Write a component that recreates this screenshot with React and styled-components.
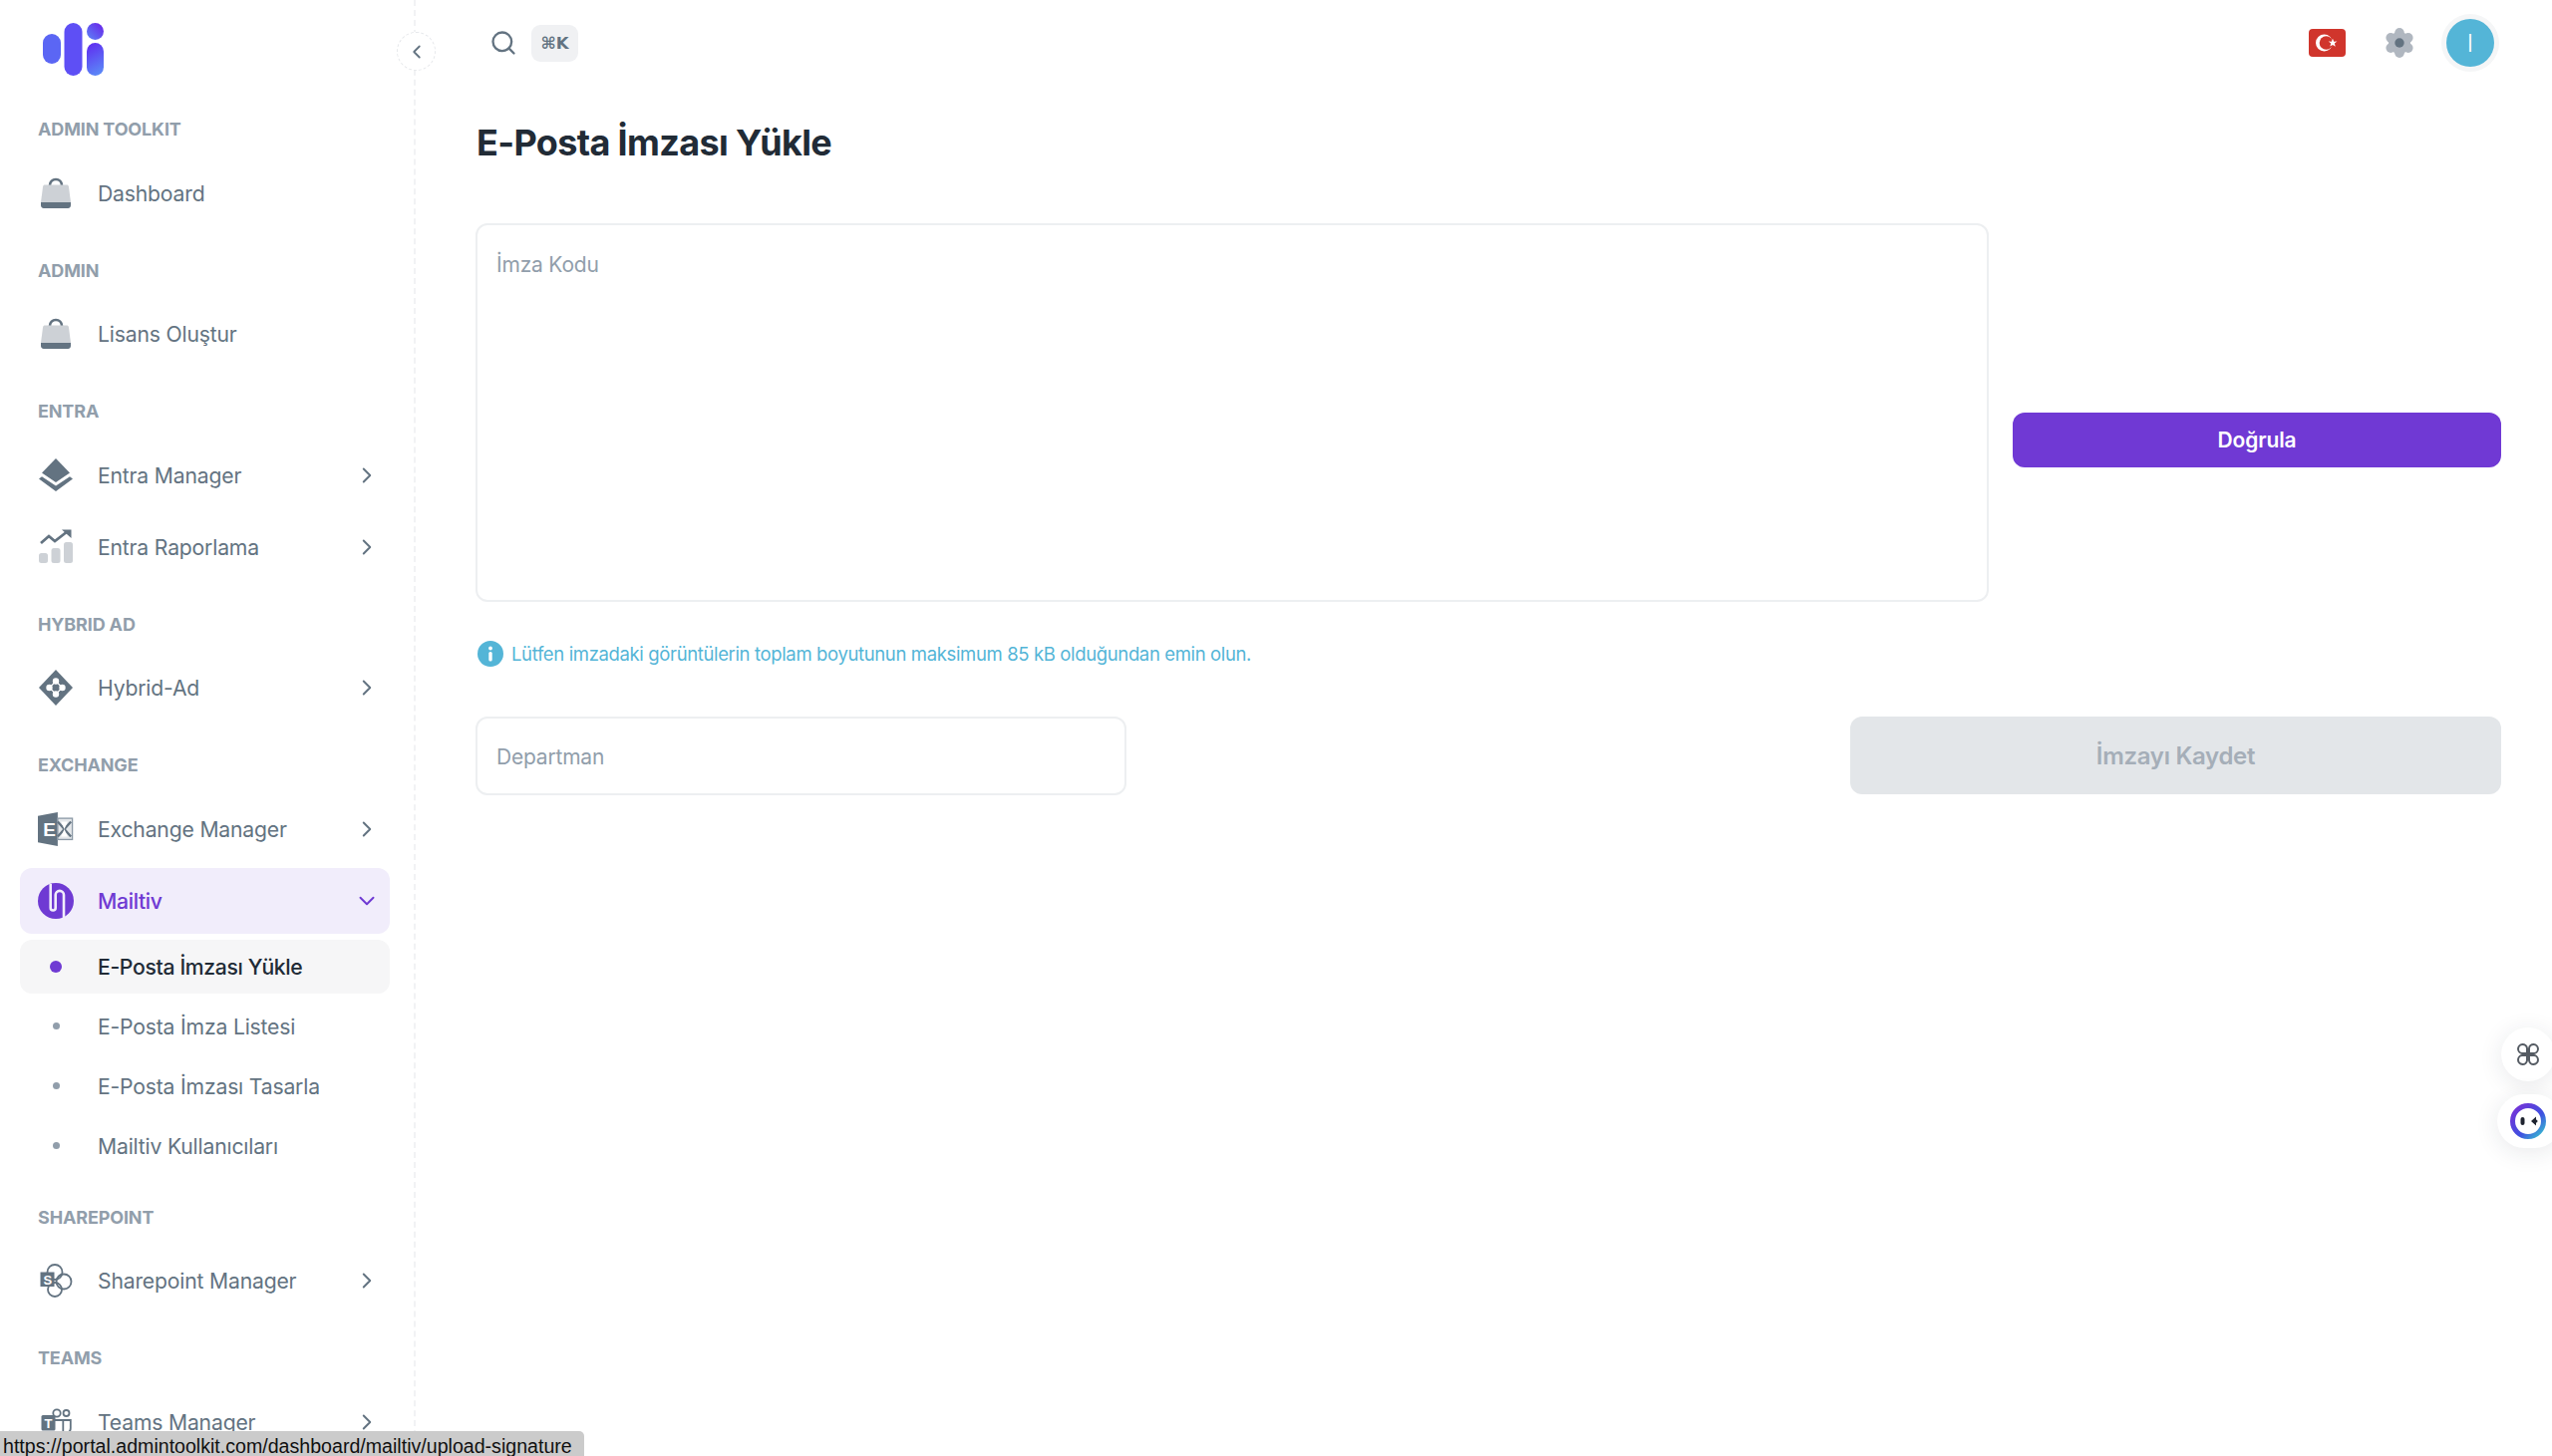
import React from "react";
import styled, { createGlobalStyle } from "styled-components";
import { ChevronLeft, ChevronRight, ChevronDown, Search } from "lucide-react";

const GlobalStyle = createGlobalStyle`
  html, body {
    margin: 0;
    height: 100%;
    background: #fff;
    overflow: hidden;
  }
  * {
    box-sizing: border-box;
  }
  body {
    font-family: Inter, "Noto Sans", sans-serif;
    color: #212b36;
  }
`;

const Layout = styled.div`
  display: flex;
  height: 100vh;
  overflow: hidden;
  position: relative;
`;

const Sidebar = styled.aside`
  position: relative;
  flex: 0 0 417px;
  height: 100%;
  border-right: 2px dashed #f1f2f4;
`;

const LogoRow = styled.div`
  height: 115px;
  padding: 22px 0 0 43px;
`;

const CollapseButton = styled.button`
  position: absolute;
  top: 32px;
  left: 398px;
  width: 39px;
  height: 39px;
  padding: 0;
  display: flex;
  align-items: center;
  justify-content: center;
  background: #fff;
  border: 1px dashed #e6e8eb;
  border-radius: 50%;
  color: #637381;
`;

const Nav = styled.nav`
  display: flex;
  flex-direction: column;
  gap: 30px;
  padding: 0 24px 0 20px;
`;

const Section = styled.section`
  display: flex;
  flex-direction: column;
  gap: 6px;
`;

const SectionLabel = styled.h4`
  margin: 0 0 9.5px;
  padding-left: 18px;
  height: 30px;
  line-height: 30px;
  font-size: 18px;
  font-weight: 700;
  letter-spacing: -0.15px;
  color: #919eab;
`;

const NavItem = styled.a`
  display: flex;
  align-items: center;
  height: 66px;
  padding: 0 10px 0 18px;
  border-radius: 12px;
  background: ${(props) => (props.$active ? "#f1edfb" : "transparent")};
  color: ${(props) => (props.$active ? "#6f3ad3" : "#637381")};
`;

const IconSlot = styled.span`
  flex: 0 0 36px;
  width: 36px;
  height: 36px;
  display: flex;
  align-items: center;
  justify-content: center;
`;

const ItemLabel = styled.span`
  flex: 1;
  margin-left: 24px;
  font-size: 21.2px;
  font-weight: ${(props) => (props.$active ? 500 : 400)};
  letter-spacing: ${(props) => (props.$active ? -0.35 : -0.2)}px;
  white-space: nowrap;
`;

const SubList = styled.div`
  display: flex;
  flex-direction: column;
  gap: 6px;
`;

const SubItem = styled.a`
  display: flex;
  align-items: center;
  height: 54px;
  padding-left: 18px;
  border-radius: 12px;
  background: ${(props) => (props.$active ? "#f6f6f7" : "transparent")};
  color: ${(props) => (props.$active ? "#212b36" : "#637381")};
`;

const SubDotSlot = styled.span`
  flex: 0 0 36px;
  display: flex;
  justify-content: center;
`;

const SubDot = styled.span`
  width: ${(props) => (props.$active ? 12 : 7)}px;
  height: ${(props) => (props.$active ? 12 : 7)}px;
  border-radius: 50%;
  background: ${(props) => (props.$active ? "#6f3ad3" : "#919eab")};
`;

const Main = styled.main`
  flex: 1;
  min-width: 0;
  padding: 0 51px 0 60px;
`;

const Header = styled.header`
  display: flex;
  align-items: center;
  justify-content: space-between;
  height: 86px;
  padding: 0 2px 0 14px;
`;

const SearchBox = styled.div`
  display: flex;
  align-items: center;
  gap: 14px;
  color: #637381;
`;

const Kbd = styled.span`
  display: flex;
  align-items: center;
  justify-content: center;
  width: 47px;
  height: 37px;
  border-radius: 9px;
  background: #f0f1f3;
  font-family: "DejaVu Sans", Inter, sans-serif;
  font-size: 16.5px;
  font-weight: 700;
  color: #637381;
`;

const HeaderActions = styled.div`
  display: flex;
  align-items: center;
  gap: 38px;
`;

const Avatar = styled.div`
  width: 48px;
  height: 48px;
  margin: 0 5px 0 -7px;
  display: flex;
  align-items: center;
  justify-content: center;
  border-radius: 50%;
  background: #54b5d7;
  box-shadow: 0 0 0 5px #f5f6f7;
  color: #fff;
  font-size: 24px;
  font-weight: 300;
`;

const Title = styled.h1`
  margin: 30px 0 54px 1px;
  height: 54px;
  line-height: 54px;
  font-size: 36px;
  font-weight: 700;
  letter-spacing: -0.65px;
  color: #212b36;
`;

const CodeRow = styled.div`
  display: flex;
  align-items: flex-start;
  gap: 24px;
`;

const CodeArea = styled.textarea`
  flex: 1;
  height: 380px;
  padding: 26.5px 19px;
  resize: none;
  border: 2px solid #edeff1;
  border-radius: 12px;
  outline: none;
  font-family: inherit;
  font-size: 21px;
  letter-spacing: -0.2px;
  &::placeholder {
    color: #919eab;
    opacity: 1;
  }
`;

const VerifyButton = styled.button`
  flex: 0 0 490px;
  height: 55px;
  margin-top: 190px;
  border: none;
  border-radius: 12px;
  background: #7039d4;
  color: #fff;
  font-family: inherit;
  font-size: 21px;
  font-weight: 600;
  letter-spacing: -0.15px;
`;

const Note = styled.div`
  display: flex;
  align-items: center;
  gap: 8px;
  height: 32px;
  margin: 36px 0 47px;
  padding-left: 2px;
  font-size: 18.5px;
  letter-spacing: -0.36px;
  color: #54b5d7;
`;

const BottomRow = styled.div`
  display: flex;
  justify-content: space-between;
  align-items: flex-start;
`;

const DepartmentInput = styled.input`
  width: 653px;
  height: 79px;
  padding: 2px 19px 0;
  border: 2px solid #edeff1;
  border-radius: 12px;
  outline: none;
  font-family: inherit;
  font-size: 21px;
  letter-spacing: -0.2px;
  &::placeholder {
    color: #919eab;
    opacity: 1;
  }
`;

const SaveButton = styled.button`
  width: 653px;
  height: 78px;
  border: none;
  border-radius: 12px;
  background: #e3e6e9;
  color: #a5aeb8;
  font-family: inherit;
  font-size: 24px;
  font-weight: 600;
  letter-spacing: -0.3px;
`;

const FloatingTab = styled.button`
  position: fixed;
  right: ${(props) => (props.$pill ? -10 : -3)}px;
  top: ${(props) => props.$top}px;
  width: ${(props) => (props.$pill ? 65 : 54)}px;
  height: 54px;
  padding: ${(props) => (props.$pill ? "0 0 0 13px" : 0)};
  display: flex;
  align-items: center;
  justify-content: ${(props) => (props.$pill ? "flex-start" : "center")};
  border: none;
  border-radius: 27px;
  background: #fff;
  box-shadow: 0 4px 24px rgba(33, 43, 54, 0.1);
`;

const StatusBar = styled.div`
  position: fixed;
  left: 0;
  bottom: 0;
  width: 586px;
  height: 25px;
  padding: 0 0 0 3px;
  background: #cbcbcb;
  border-top-right-radius: 5px;
  font-family: "Liberation Sans", Arial, sans-serif;
  font-size: 19.6px;
  line-height: 30px;
  color: #111;
  white-space: nowrap;
  overflow: hidden;
`;

const Logo = () => (
  <svg width="62" height="54" viewBox="0 0 62 54">
    <defs>
      <linearGradient id="logoA" x1="1" y1="0" x2="0" y2="1">
        <stop offset="0" stopColor="#6a1fe8" />
        <stop offset="1" stopColor="#5b86f7" />
      </linearGradient>
      <linearGradient id="logoB" x1="0.2" y1="0" x2="0.5" y2="1">
        <stop offset="0" stopColor="#5f2cf0" />
        <stop offset="1" stopColor="#5b86f7" />
      </linearGradient>
    </defs>
    <rect x="0" y="12" width="18" height="30" rx="9" fill="#5b66f4" />
    <rect x="21.5" y="1" width="18" height="53" rx="9" fill="#5e4ff5" />
    <circle cx="52.5" cy="9.5" r="8.5" fill="url(#logoA)" />
    <rect x="44" y="21" width="17" height="33" rx="8.5" fill="url(#logoB)" />
  </svg>
);

const BagIcon = () => (
  <svg width="36" height="36" viewBox="0 0 36 36">
    <path d="M12 10c0-3.500 2.600-6 6-6s6 2.500 6 6" fill="none" stroke="#637381" strokeWidth="2.600" />
    <path d="M7 9.500h22c1 0 1.700.6 1.900 1.500l2.100 16H3l2.100-16c.2-.9.9-1.500 1.900-1.500z" fill="#cdd1d6" />
    <path d="M3 27h30v3c0 1.600-1.100 3-2.800 3H5.800C4.100 33 3 31.600 3 30v-3z" fill="#637381" />
  </svg>
);

const EntraIcon = () => (
  <svg width="36" height="36" viewBox="0 0 36 36">
    <path d="M18 1l14 14.500L18 25 4 15.500 18 1z" fill="#637381" />
    <path d="M1 21.500l3-2.300L18 28.500l14-9.300 3 2.300L18 34 1 21.500z" fill="#637381" />
  </svg>
);

const ReportIcon = () => (
  <svg width="36" height="36" viewBox="0 0 36 36">
    <path d="M3 14l8-7 6 5L30 2" fill="none" stroke="#637381" strokeWidth="2.800" />
    <path d="M24 .5h9.500V9z" fill="#637381" />
    <rect x="1" y="24" width="9" height="10" rx="2.500" fill="#cdd1d6" />
    <rect x="13.500" y="19" width="9" height="15" rx="2.500" fill="#cdd1d6" />
    <rect x="26" y="13" width="9" height="21" rx="2.500" fill="#cdd1d6" />
  </svg>
);

const HybridIcon = () => (
  <svg width="36" height="36" viewBox="0 0 36 36">
    <path d="M18 0l17 18-17 18L1 18 18 0z" fill="#637381" />
    <g fill="#fff">
      <circle cx="18" cy="11.500" r="3.200" />
      <circle cx="11.500" cy="18" r="3.200" />
      <circle cx="24.500" cy="18" r="3.200" />
      <circle cx="18" cy="24.500" r="3.200" />
    </g>
    <path d="M18 11.500L24.500 18 18 24.500 11.500 18z" fill="none" stroke="#fff" strokeWidth="1.200" />
  </svg>
);

const ExchangeIcon = () => (
  <svg width="38" height="36" viewBox="0 0 38 36">
    <path d="M21 0v36L0 32V4L21 0z" fill="#637381" />
    <rect x="21" y="6.500" width="15.500" height="22.500" fill="#e4e7ea" stroke="#8c99a6" strokeWidth="1.400" />
    <path d="M21 10l14 16M35 10L21 26" stroke="#637381" strokeWidth="2.400" fill="none" />
    <path d="M28 18l-3.500-8h7zM28 18l-3.500 8h7z" fill="#fff" />
    <text x="5.500" y="25" fontFamily="Liberation Sans, sans-serif" fontWeight="700" fontSize="20" fill="#fff">E</text>
  </svg>
);

const MailtivIcon = () => (
  <svg width="36" height="36" viewBox="0 0 36 36">
    <circle cx="18" cy="18" r="18" fill="#6f3ad3" />
    <path
      d="M12.700 1V25a2.500 2.500 0 0 0 5 0V12a4.100 4.100 0 0 1 8.300 0V35"
      fill="none"
      stroke="#f1edfb"
      strokeWidth="2.600"
    />
  </svg>
);

const SharepointIcon = () => (
  <svg width="36" height="36" viewBox="0 0 36 36">
    <g fill="none" stroke="#637381" strokeWidth="1.800">
      <circle cx="17" cy="9.500" r="7.500" />
      <circle cx="26" cy="19" r="7.500" />
      <circle cx="17" cy="27" r="7" />
    </g>
    <rect x="2.500" y="9.500" width="14" height="14.500" fill="#637381" />
    <text x="5.500" y="21.500" fontFamily="Liberation Sans, sans-serif" fontWeight="700" fontSize="13" fill="#fff">S</text>
  </svg>
);

const TeamsIcon = () => (
  <svg width="36" height="36" viewBox="0 0 36 36">
    <g fill="none" stroke="#637381" strokeWidth="1.800">
      <circle cx="19" cy="9" r="3.700" />
      <circle cx="28.500" cy="9" r="3" />
      <path d="M17 16h8.300v13a5 5 0 0 1-5 5h-3" />
      <path d="M25.300 16h7.500v8a4.500 4.500 0 0 1-7 4" />
    </g>
    <rect x="3.500" y="11" width="14" height="15.500" rx="1.500" fill="#637381" />
    <text x="6.500" y="23.500" fontFamily="Liberation Sans, sans-serif" fontWeight="700" fontSize="13" fill="#fff">T</text>
  </svg>
);

const TurkishFlag = () => (
  <svg width="37" height="28" viewBox="0 0 37 28">
    <rect width="37" height="28" rx="4" fill="#d0352c" />
    <circle cx="15.500" cy="14" r="8.500" fill="#fff" />
    <circle cx="17.500" cy="14" r="6.800" fill="#d0352c" />
    <path d="M24 9.800l1.200 3 3.200-.2-2.500 2 .8 3.100-2.700-1.800-2.700 1.700.9-3-2.500-2 3.200.1z" fill="#fff" />
  </svg>
);

const GearIcon = () => (
  <svg width="32" height="32" viewBox="0 0 32 32">
    <g fill="#b0b7c0">
      <circle cx="16" cy="16" r="11" />
      <circle cx="16" cy="5.800" r="4.800" />
      <circle cx="16" cy="26.200" r="4.800" />
      <circle cx="7.200" cy="10.900" r="4.800" />
      <circle cx="24.800" cy="10.900" r="4.800" />
      <circle cx="7.200" cy="21.100" r="4.800" />
      <circle cx="24.800" cy="21.100" r="4.800" />
    </g>
    <circle cx="16" cy="16" r="4.700" fill="#637381" />
  </svg>
);

const InfoIcon = () => (
  <svg width="26" height="26" viewBox="0 0 26 26">
    <circle cx="13" cy="13" r="13" fill="#54b5d7" />
    <circle cx="13" cy="7.500" r="1.900" fill="#fff" />
    <rect x="11.300" y="11" width="3.400" height="9.500" rx="1.500" fill="#fff" />
  </svg>
);

const PetalsIcon = () => (
  <svg width="24" height="24" viewBox="0 0 24 24" fill="none" stroke="#555b63" strokeWidth="2">
    <path d="M11 11H6a4.500 4.500 0 1 1 5-5v5z" />
    <path d="M13 11h5a4.500 4.500 0 1 0-5-5v5z" />
    <path d="M11 13H6a4.500 4.500 0 1 0 5 5v-5z" />
    <path d="M13 13h5a4.500 4.500 0 1 1-5 5v-5z" />
  </svg>
);

const BotIcon = () => (
  <svg width="36" height="36" viewBox="0 0 36 36">
    <defs>
      <linearGradient id="botRing" x1="0" y1="0" x2="1" y2="1">
        <stop offset="0" stopColor="#7b2fd6" />
        <stop offset="0.6" stopColor="#3f51e0" />
        <stop offset="1" stopColor="#38c6cf" />
      </linearGradient>
    </defs>
    <circle cx="18" cy="18" r="15.500" fill="#fff" stroke="url(#botRing)" strokeWidth="5" />
    <rect x="10.500" y="14" width="4" height="8" rx="2" fill="#1f2430" />
    <path d="M26 13.500l-5 4.500 5 4.500v-3a1.500 1.500 0 0 0 0-3z" fill="#1f2430" />
  </svg>
);

const menu = [
  { label: "ADMIN TOOLKIT", items: [{ name: "Dashboard", icon: <BagIcon /> }] },
  { label: "ADMIN", items: [{ name: "Lisans Oluştur", icon: <BagIcon /> }] },
  {
    label: "ENTRA",
    items: [
      { name: "Entra Manager", icon: <EntraIcon />, arrow: true },
      { name: "Entra Raporlama", icon: <ReportIcon />, arrow: true },
    ],
  },
  { label: "HYBRID AD", items: [{ name: "Hybrid-Ad", icon: <HybridIcon />, arrow: true }] },
  {
    label: "EXCHANGE",
    items: [
      { name: "Exchange Manager", icon: <ExchangeIcon />, arrow: true },
      {
        name: "Mailtiv",
        icon: <MailtivIcon />,
        active: true,
        children: [
          { name: "E-Posta İmzası Yükle", active: true },
          { name: "E-Posta İmza Listesi" },
          { name: "E-Posta İmzası Tasarla" },
          { name: "Mailtiv Kullanıcıları" },
        ],
      },
    ],
  },
  { label: "SHAREPOINT", items: [{ name: "Sharepoint Manager", icon: <SharepointIcon />, arrow: true }] },
  { label: "TEAMS", items: [{ name: "Teams Manager", icon: <TeamsIcon />, arrow: true }] },
];

const App = () => {
  return (
    <Layout>
      <GlobalStyle />
      <Sidebar>
        <LogoRow>
          <Logo />
        </LogoRow>
        <CollapseButton>
          <ChevronLeft size={22} strokeWidth={2} />
        </CollapseButton>
        <Nav>
          {menu.map((section) => (
            <Section key={section.label}>
              <SectionLabel>{section.label}</SectionLabel>
              {section.items.map((item) => (
                <React.Fragment key={item.name}>
                  <NavItem $active={item.active}>
                    <IconSlot>{item.icon}</IconSlot>
                    <ItemLabel $active={item.active}>{item.name}</ItemLabel>
                    {item.arrow && <ChevronRight size={26} strokeWidth={1.8} />}
                    {item.active && <ChevronDown size={26} strokeWidth={1.8} />}
                  </NavItem>
                  {item.children && (
                    <SubList>
                      {item.children.map((child) => (
                        <SubItem key={child.name} $active={child.active}>
                          <SubDotSlot>
                            <SubDot $active={child.active} />
                          </SubDotSlot>
                          <ItemLabel $active={child.active}>{child.name}</ItemLabel>
                        </SubItem>
                      ))}
                    </SubList>
                  )}
                </React.Fragment>
              ))}
            </Section>
          ))}
        </Nav>
      </Sidebar>
      <Main>
        <Header>
          <SearchBox>
            <Search size={28} strokeWidth={2} />
            <Kbd>⌘K</Kbd>
          </SearchBox>
          <HeaderActions>
            <TurkishFlag />
            <GearIcon />
            <Avatar>I</Avatar>
          </HeaderActions>
        </Header>
        <Title>E-Posta İmzası Yükle</Title>
        <CodeRow>
          <CodeArea placeholder="İmza Kodu" />
          <VerifyButton>Doğrula</VerifyButton>
        </CodeRow>
        <Note>
          <InfoIcon />
          Lütfen imzadaki görüntülerin toplam boyutunun maksimum 85 kB olduğundan emin olun.
        </Note>
        <BottomRow>
          <DepartmentInput placeholder="Departman" />
          <SaveButton>İmzayı Kaydet</SaveButton>
        </BottomRow>
      </Main>
      <FloatingTab $top={1031}>
        <PetalsIcon />
      </FloatingTab>
      <FloatingTab $pill $top={1098}>
        <BotIcon />
      </FloatingTab>
      <StatusBar>https://portal.admintoolkit.com/dashboard/mailtiv/upload-signature</StatusBar>
    </Layout>
  );
};

export default App;
